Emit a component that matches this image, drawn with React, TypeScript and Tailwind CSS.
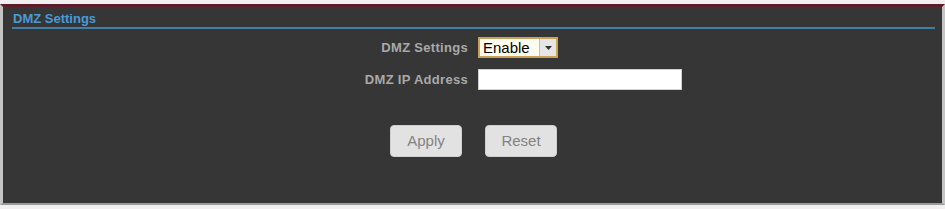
import { useState } from 'react';

function App() {
  const [mode, setMode] = useState('Enable');
  const [ip, setIp] = useState('');

  return (
    <div className="w-[945px] h-[209px] bg-[#f3eef0] pt-[4px] font-['Liberation_Sans',Arial,sans-serif]">
      <div className="h-[201px] bg-[#363636] border-t-[3px] border-t-[#5c1c2b] border-l-[3px] border-l-[#c4c4c4] border-r-[3px] border-r-[#c4c4c4] border-b-[2px] border-b-[#9a9a9a] px-[9px] pt-[4px]">
        {/* section title */}
        <div className="border-b-2 border-[#3f7fa8] mr-[-2px]">
          <h2 className="text-[13px] leading-[16px] font-bold text-[#4a9ad6] pl-px">DMZ Settings</h2>
        </div>

        <div className="mt-[8px] flex flex-col gap-[11px]">
          <div className="flex items-center">
            <label className="w-[466px] pr-[10px] text-right text-[13px] tracking-[0.3px] font-bold text-[#a9a9a9]">DMZ Settings</label>
            <div className="relative w-[80px] h-[21px] border-2 border-[#c9a35a] bg-[#fffdf2] flex items-center">
              <select
                value={mode}
                onChange={(e) => setMode(e.target.value)}
                className="appearance-none w-full h-full bg-transparent pl-[3px] text-[15px] leading-none text-black outline-none"
              >
                <option>Enable</option>
                <option>Disable</option>
              </select>
              <div className="absolute right-0 top-0 h-full w-[17px] border-l border-[#bdbdbd] bg-[#e6e6e6] flex items-center justify-center pointer-events-none">
                <svg width="7" height="4" viewBox="0 0 7 4">
                  <path d="M0 0h7L3.5 4z" fill="#333" />
                </svg>
              </div>
            </div>
          </div>

          <div className="flex items-center">
            <label className="w-[466px] pr-[10px] text-right text-[13px] tracking-[0.3px] font-bold text-[#a9a9a9]">DMZ IP Address</label>
            <input
              value={ip}
              onChange={(e) => setIp(e.target.value)}
              className="w-[204px] h-[21px] bg-white border border-[#d0d0d0] outline-none px-1 text-[13px]"
            />
          </div>
        </div>

        <div className="mt-[35px] flex gap-[23px] pl-[378px]">
          <button className="w-[72px] h-[32px] rounded-[4px] bg-[#e2e2e2] border border-[#cfcfcf] text-[15px] text-[#838383]">
            Apply
          </button>
          <button className="w-[72px] h-[32px] rounded-[4px] bg-[#e2e2e2] border border-[#cfcfcf] text-[15px] text-[#838383]">
            Reset
          </button>
        </div>
      </div>
    </div>
  );
}

export default App;
